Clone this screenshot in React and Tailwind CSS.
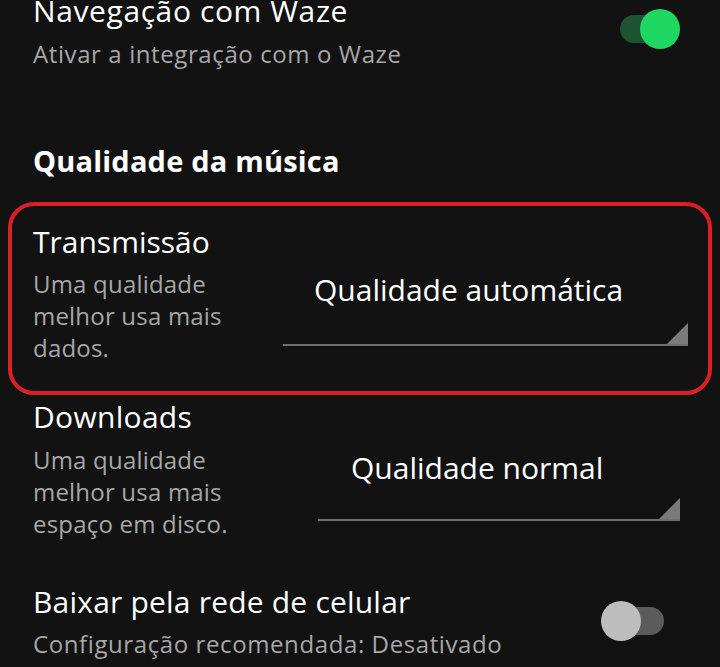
const Toggle = ({ on }) => (
  <div className="relative w-[66px] h-[40px] flex items-center">
    <div
      className={`h-[28px] rounded-full ${
        on ? 'ml-[4px] w-[56px] bg-[#1d5330]' : 'ml-[22px] w-[41px] bg-[#5b5b5b]'
      }`}
    />
    <div
      className={`absolute top-0 w-[40px] h-[40px] rounded-full ${
        on ? 'left-[24px] bg-[#1ed760]' : 'left-0 bg-[#bdbdbd]'
      }`}
    />
  </div>
);

const Dropdown = ({ label, size, pad }) => (
  <div className={`relative ${size}`}>
    <div className={`${pad} text-[30px] leading-[32px] text-white whitespace-nowrap`}>{label}</div>
    <div className="absolute right-0 bottom-0 w-0 h-0 border-l-[23px] border-l-transparent border-b-[23px] border-b-[#7a7a7a]" />
    <div className="absolute left-0 right-0 bottom-0 h-[2px] bg-[#6e6e6e]" />
  </div>
);

export default function App() {
  return (
    <div className="w-[720px] h-[667px] overflow-hidden bg-[#121212] font-['Open_Sans',sans-serif]">
      <div className="flex items-center justify-between pl-[33px] pr-[38px] -mt-[5px]">
        <div>
          <div className="text-[30px] leading-[32px] tracking-[0.6px] text-white">Navegação com Waze</div>
          <div className="mt-[11px] text-[24px] leading-[32px] tracking-[0.6px] text-[#a7a7a7]">
            Ativar a integração com o Waze
          </div>
        </div>
        <div className="-mt-[8px]">
          <Toggle on />
        </div>
      </div>

      <div className="pl-[33px] mt-[75px] text-[29px] leading-[32px] tracking-[0.2px] font-bold text-white">
        Qualidade da música
      </div>

      <div className="mx-[8px] mt-[25px] h-[193px] rounded-[26px] border-[4px] border-[#dc1f26] pl-[21px] pr-[20px] pt-[20px]">
        <div className="flex justify-between">
          <div>
            <div className="text-[30px] leading-[32px] text-white">Transmissão</div>
            <div className="mt-[10px] text-[24px] leading-[32px] tracking-[0.2px] text-[#a7a7a7]">
              <div>Uma qualidade</div>
              <div>melhor usa mais</div>
              <div>dados.</div>
            </div>
          </div>
          <div className="mt-[48px]">
            <Dropdown label="Qualidade automática" size="w-[405px] h-[72px]" pad="pl-[31px]" />
          </div>
        </div>
      </div>

      <div className="flex justify-between pl-[33px] pr-[40px] mt-[6px]">
        <div>
          <div className="text-[30px] leading-[32px] tracking-[0.3px] text-white">Downloads</div>
          <div className="mt-[11px] text-[24px] leading-[32px] tracking-[0.2px] text-[#a7a7a7]">
            <div>Uma qualidade</div>
            <div>melhor usa mais</div>
            <div>espaço em disco.</div>
          </div>
        </div>
        <div className="mt-[51px]">
          <Dropdown label="Qualidade normal" size="w-[362px] h-[69px]" pad="pl-[33px]" />
        </div>
      </div>

      <div className="flex items-center justify-between pl-[33px] pr-[53px] mt-[46px]">
        <div>
          <div className="text-[30px] leading-[32px] tracking-[0.2px] text-white">Baixar pela rede de celular</div>
          <div className="mt-[10px] text-[24px] leading-[32px] tracking-[0.6px] text-[#a7a7a7]">
            Configuração recomendada: Desativado
          </div>
        </div>
        <div className="-mt-[4px]">
          <Toggle />
        </div>
      </div>
    </div>
  );
}
